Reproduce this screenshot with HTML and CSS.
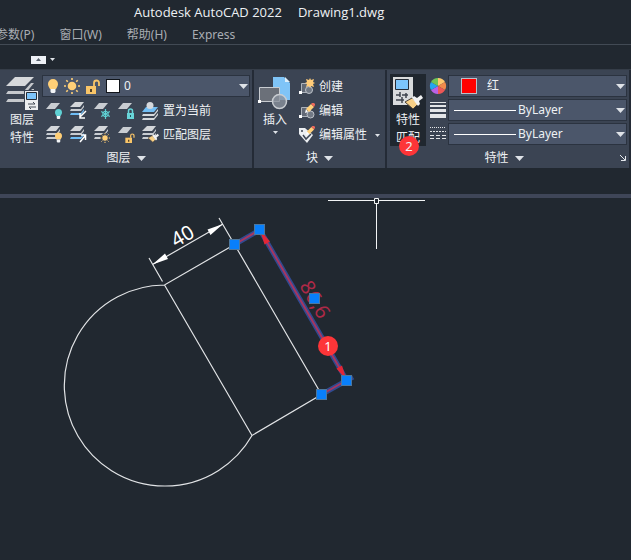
FILE: index.html
```html
<!DOCTYPE html>
<html lang="zh-CN">
<head>
<meta charset="utf-8">
<title>Autodesk AutoCAD 2022 - Drawing1.dwg</title>
<link rel="stylesheet" href="styles.css">
</head>
<body>
<svg class="defs" aria-hidden="true">
  <symbol id="sheet" viewBox="0 0 18 18"><path d="M5 1h9L9 7H0z" fill="#c9cdd2"/></symbol>
  <symbol id="stack" viewBox="0 0 18 18">
    <path d="M5 0h9l-4 5H0z" fill="#d3d6da"/>
    <path d="M1 7h10l3-4v2l-3 4H0zM1 11h10l3-4v2l-3 4H0z" fill="#c9cdd2"/>
  </symbol>
  <symbol id="bluestack" viewBox="0 0 18 18">
    <path d="M5 0h9l-4 5H0z" fill="#d3d6da"/>
    <path d="M1 7h10l3-4v2l-3 4H0z" fill="#c9cdd2"/>
    <path d="M1 11h10l3-4v2l-3 4H0z" fill="#6fbdf5"/>
  </symbol>
  <symbol id="bulb" viewBox="0 0 10 14">
    <path d="M5 0a5 5 0 0 1 5 5c0 2-1 3-2 5H2C1 8 0 7 0 5a5 5 0 0 1 5-5z" fill="currentColor"/>
    <path d="M2.500 10h5v3l-1 1h-3l-1-1z" fill="#f3f5f7"/>
  </symbol>
  <symbol id="sun" viewBox="0 0 16 16">
    <circle cx="8" cy="8" r="4.300" fill="#ffcf77"/>
    <path d="M8 0v2M8 14v2M0 8h2M14 8h2M2.300 2.300l1.500 1.500M12.200 12.200l1.500 1.500M2.300 13.700l1.500-1.500M12.200 3.800l1.500-1.500" stroke="#ffcf77" stroke-width="1.600"/>
  </symbol>
  <symbol id="unlock" viewBox="0 0 14 15">
    <path d="M0 7h10v8H0z" fill="#f9c568"/>
    <path d="M8 7V4a2.500 2.500 0 0 1 5 0v3" fill="none" stroke="#f9c568" stroke-width="1.800"/>
    <path d="M4 10h2v3H4z" fill="#51422b"/>
  </symbol>
  <symbol id="pencil" viewBox="0 0 10 10">
    <path d="M0 10l1-4 2 3z" fill="#fff"/><path d="M1 6l5-5 3 3-5 5z" fill="#ffd07a"/><path d="M6 1l1-1h2l1 1v1L9 4z" fill="#ef6a5b"/>
  </symbol>
  <symbol id="brush" viewBox="0 0 18 14">
    <path d="M7 3l6 6-5 5L0 7z" fill="#f7cf86" stroke="#4a4238"/>
    <path d="M7 3l2-2 3 2 4-3 2 3-4 3 1 3-2 2z" fill="#f1f2f3"/>
  </symbol>
  <symbol id="down" viewBox="0 0 9 5"><path d="M0 0h9L4.500 5z" fill="#dfe3e8"/></symbol>
</svg>

<header class="titlebar"><span>Autodesk AutoCAD 2022</span><span>Drawing1.dwg</span></header>
<nav class="menubar">
  <a href="#">参数(P)</a><a href="#">窗口(W)</a><a href="#">帮助(H)</a><a href="#">Express</a>
</nav>
<div class="tabstrip">
  <button class="minimize" aria-label="最小化功能区"><svg width="5" height="3" viewBox="0 0 5 3"><path d="M0 3h5L2.500 0z" fill="#59616d"/></svg></button>
  <button class="plain" aria-label="功能区选项"><svg width="5" height="3"><use href="#down"/></svg></button>
</div>

<main>
<div class="ribbon">
  <section class="panel layers">
    <div class="body">
      <button class="big">
        <svg width="32" height="34" viewBox="0 0 32 34">
          <path d="M9 1h19l-9 9H0z" fill="#d6d8db"/>
          <path d="M2 15h16l7-8h3l-9 11H0zM2 23h16l8-10h2v2l-9 11H0z" fill="#c6c9cd"/>
          <path d="M18 14h14v20H18z" fill="#3b4453"/>
          <path d="M19 15h13v19H19z" fill="#eceef0"/>
          <path d="M20.500 16.500h10v7h-10z" fill="#7dc4fa" stroke="#252c36"/>
          <path d="M22 28h7l-2-2M30 31h-7l2 2" fill="none" stroke="#424a55"/>
        </svg>
        <span>图层</span><span>特性</span>
      </button>
      <div class="rows">
        <div class="combo layer-combo">
          <svg class="amber" width="10" height="14"><use href="#bulb"/></svg>
          <svg width="16" height="16"><use href="#sun"/></svg>
          <svg width="14" height="15"><use href="#unlock"/></svg>
          <i class="swatch white"></i>
          <select aria-label="图层"><option>0</option></select>
          <svg class="arrow" width="9" height="5"><use href="#down"/></svg>
        </div>
        <div class="tools">
          <button aria-label="关"><svg width="18" height="18"><use href="#sheet" width="18" height="18"/><use class="teal" href="#bulb" x="9" y="7" width="7" height="10"/></svg></button>
          <button aria-label="隔离"><svg width="18" height="18"><use href="#bluestack" width="18" height="18"/><path d="M16 9l-6 6M10 11v5h5" fill="none" stroke="#fff" stroke-width="1.500"/></svg></button>
          <button aria-label="冻结"><svg width="18" height="18"><use href="#sheet" width="18" height="18"/><path d="M11.500 7v10M7.200 9.500l8.600 5M15.800 9.500l-8.600 5" stroke="#5fd0d3" stroke-width="1.200"/><circle cx="11.500" cy="12" r="2.800" fill="none" stroke="#5fd0d3"/></svg></button>
          <button aria-label="锁定"><svg width="18" height="18"><use href="#sheet" width="18" height="18"/><path d="M9 11h7v6H9z" fill="#68d5d9"/><path d="M10.500 11V9a2 2 0 0 1 4 0v2" fill="none" stroke="#68d5d9" stroke-width="1.500"/><path d="M12 13h1v2h-1z" fill="#26525a"/></svg></button>
          <button class="labelled"><svg width="18" height="18"><path d="M4 5h12l-4 5H0z" fill="#73bff5"/><path d="M1 12h11l4-5v2l-4 5H0zM1 16h11l4-5v2l-4 5H0z" fill="#d5d8dc"/><circle cx="8" cy="3.500" r="3.500" fill="#d5d8dc"/></svg>置为当前</button>
        </div>
        <div class="tools">
          <button aria-label="打开所有图层"><svg width="18" height="18"><use href="#stack" width="18" height="18"/><use class="amber" href="#bulb" x="9" y="6" width="7" height="11"/></svg></button>
          <button aria-label="取消隔离"><svg width="18" height="18"><use href="#bluestack" width="18" height="18"/><path d="M10 16l5-6M11 9h4.500v5" fill="none" stroke="#fff" stroke-width="1.500"/></svg></button>
          <button aria-label="解冻所有图层"><svg width="18" height="18"><use href="#stack" width="18" height="18"/><circle cx="11" cy="12" r="5" fill="#3b4453"/><use href="#sun" x="6" y="7" width="10" height="10"/></svg></button>
          <button aria-label="解锁"><svg width="18" height="18"><use href="#sheet" width="18" height="18"/><use href="#unlock" x="7" y="7" width="10" height="10"/></svg></button>
          <button class="labelled"><svg width="18" height="18"><use href="#stack" width="18" height="18"/><use href="#brush" x="6" y="7" width="11" height="10"/></svg>匹配图层</button>
        </div>
      </div>
    </div>
    <footer><button class="plain">图层<svg width="9" height="5"><use href="#down"/></svg></button></footer>
  </section>

  <section class="panel blocks">
    <div class="body">
      <button class="big">
        <svg width="34" height="34" viewBox="0 0 34 34">
          <path d="M15 1h11l6 6v17H15z" fill="#7fc4f7"/><path d="M27 1v5h5z" fill="#dceefa"/>
          <path d="M1.500 11.500h20v14h-20z" fill="#6b7079" stroke="#c8ccd1"/>
          <circle cx="21.500" cy="25.500" r="7" fill="#8a919ccc" stroke="#c8ccd1" stroke-width="1.500"/>
          <path d="M0 24h3v3H0z" fill="#fff"/>
        </svg>
        <span>插入</span>
        <svg class="drop" width="5" height="3"><use href="#down"/></svg>
      </button>
      <div class="rows">
        <button class="labelled"><svg width="18" height="18"><path d="M3.500 5.500h9v9h-9z" fill="#626976" stroke="#aeb4bc"/><circle cx="11" cy="12" r="3.500" fill="#717985" stroke="#bdc2c9"/><path d="M1 13h3v3H1z" fill="#fff"/><path d="M12 0l1 2 3-1-1 3 2 1-2 1 1 3-3-1-1 2-1-2-3 1 1-3-2-1 2-1-1-3 3 1z" fill="#ffcb78"/></svg>创建</button>
        <button class="labelled"><svg width="18" height="18"><path d="M3.500 5.500h9v9h-9z" fill="#626976" stroke="#aeb4bc"/><circle cx="12.500" cy="12.500" r="3.500" fill="#717985" stroke="#bdc2c9"/><path d="M1 13h3v3H1z" fill="#fff"/><use href="#pencil" x="7" y="1" width="10" height="10"/></svg>编辑</button>
        <button class="labelled"><svg width="18" height="18"><path d="M1 2h6l8 7-6 8-8-9z" fill="#eceff2"/><circle cx="4" cy="5" r="1" fill="#3b4453"/><path d="M5 9l3 4 5-5" fill="none" stroke="#3b4453" stroke-width="1.500"/><use href="#pencil" x="8" y="0" width="9" height="9"/></svg>编辑属性<svg class="more" width="5" height="3"><use href="#down"/></svg></button>
      </div>
    </div>
    <footer><button class="plain">块<svg width="9" height="5"><use href="#down"/></svg></button></footer>
  </section>

  <section class="panel properties">
    <div class="body">
      <div class="match">
        <button class="big active">
          <svg width="32" height="34" viewBox="0 0 32 34">
            <path d="M1 1h20v28H1z" fill="#d9dbdc"/>
            <path d="M3.500 3.500h13v10h-13z" fill="#7cc5fb" stroke="#252c36"/>
            <path d="M4 19h4m2 0h6M4 24h8M8 16v5M10 21v6M14 17v5" stroke="#3f454e" stroke-width="1.500"/>
            <use href="#brush" x="13" y="19" width="18" height="14"/>
          </svg>
          <span>特性</span><span>匹配</span>
        </button>
        <span class="badge">2</span>
      </div>
      <div class="rows">
        <div class="property">
          <svg width="18" height="18" viewBox="-9 -9 18 18">
            <path d="M0 0V-8A8 8 0 0 1 7-4z" fill="#ffc86d"/><path d="M0 0l7-4a8 8 0 0 1 0 8z" fill="#f18a4b"/><path d="M0 0l7 4a8 8 0 0 1-7 4z" fill="#ee5756"/><path d="M0 0v8a8 8 0 0 1-7-4z" fill="#bb61e5"/><path d="M0 0l-7 4a8 8 0 0 1 0-8z" fill="#25a5f1"/><path d="M0 0l-7-4a8 8 0 0 1 7-4z" fill="#6fc557"/>
          </svg>
          <div class="combo"><i class="swatch red"></i><select aria-label="对象颜色"><option>红</option></select><svg class="arrow" width="9" height="5"><use href="#down"/></svg></div>
        </div>
        <div class="property">
          <svg width="18" height="18"><path d="M1 1h16v1H1zM1 4h16v2H1zM1 8h16v3H1zM1 13h16v4H1z" fill="#e3e5e8"/></svg>
          <div class="combo"><i class="sample"></i><select aria-label="线宽"><option>ByLayer</option></select><svg class="arrow" width="9" height="5"><use href="#down"/></svg></div>
        </div>
        <div class="property">
          <svg width="18" height="18" stroke="#e3e5e8" fill="none"><path d="M1 2.500h16" stroke-dasharray="1 1"/><path d="M1 6.500h16" stroke-dasharray="2 1"/><path d="M1 10.500h16" stroke-dasharray="4 2"/><path d="M1 13.500h16" stroke-dasharray="4 2"/></svg>
          <div class="combo"><i class="sample"></i><select aria-label="线型"><option>ByLayer</option></select><svg class="arrow" width="9" height="5"><use href="#down"/></svg></div>
        </div>
      </div>
    </div>
    <footer><button class="plain">特性<svg width="9" height="5"><use href="#down"/></svg></button>
      <button class="plain launcher" aria-label="特性选项板"><svg width="6" height="6" viewBox="0 0 6 6"><path d="M0 0l5 5M5.500 1v4.500H1" fill="none" stroke="#e3e7ec"/></svg></button></footer>
  </section>
</div>

<svg class="drawing" viewBox="0 198 631 362" preserveAspectRatio="xMinYMin meet" role="img" aria-label="图形窗口">
  <g class="geometry">
    <path d="M252 435.500A100.500 100.500 0 1 1 164.500 285L234.500 244.500L321.500 394.500L252 435.500L164.500 285"/>
    <path d="M162.500 281.500L149 258M234.500 244.500L219 218M152.500 264.500L223 224"/>
  </g>
  <path class="tips" d="M152.500 264.500L165 253.500L168 259ZM223 224L207.500 229.500L210.500 235Z"/>
  <text class="dim" text-anchor="middle" transform="translate(186 242) rotate(-30)">40</text>
  <text class="dim selected-text" text-anchor="middle" transform="translate(309 303) rotate(60)">86,6</text>
  <g class="selected">
    <path class="glow" d="M234.500 244.500L264 227.500M321.500 394.500L353 377M260 230L346.500 380"/>
    <path d="M234.500 244.500L262 228.500M321.500 394.500L350 378.500M260 230L346.500 380"/>
  </g>
  <path class="selected-tips" d="M260 230L270 241.500L264.500 244.500ZM346.500 380L336.500 368.500L342 365.500Z"/>
  <g class="grips">
    <rect x="254.500" y="224.500" width="10" height="10"/><rect x="229.500" y="239.500" width="10" height="10"/>
    <rect x="309.500" y="293.500" width="10" height="10"/><rect x="341.500" y="375.500" width="10" height="10"/>
    <rect x="316.500" y="389.500" width="10" height="10"/>
  </g>
  <circle cx="328" cy="346" r="10" fill="#fd3538"/>
  <text class="marker" x="328" y="351" text-anchor="middle">1</text>
  <path class="crosshair" d="M328 200.500H374M379 200.500H425M376.500 203V249M374.500 198.500h4v5h-4z"/>
</svg>
</main>
</body>
</html>
```

FILE: styles.css
```css
* { box-sizing: border-box; }

body {
  margin: 0;
  min-height: 100vh;
  background: #212830;
  color: #eef1f4;
  font: 12px/18px "Noto Sans", "Noto Sans CJK SC", sans-serif;
}

svg { display: block; flex: none; }
.defs { position: absolute; width: 0; height: 0; }

button, select {
  margin: 0;
  padding: 0;
  border: 0;
  background: none;
  color: inherit;
  font: inherit;
}

.titlebar {
  display: flex;
  gap: 16px;
  height: 24px;
  padding-left: 134px;
  font-family: "Open Sans", sans-serif;
  font-size: 13px;
  line-height: 24px;
}

.menubar {
  display: flex;
  gap: 25px;
  height: 21px;
  margin-left: -4px;
  border-bottom: 1px solid #424a54;
  line-height: 22px;
}
.menubar a { color: #a9adb3; text-decoration: none; white-space: nowrap; }

.tabstrip {
  display: flex;
  align-items: center;
  gap: 4px;
  height: 25px;
  padding: 5px 0 0 31px;
  border-bottom: 1px solid #353d48;
}
.minimize {
  display: grid;
  place-items: center;
  width: 15px;
  height: 8px;
  background: #eef1f6;
}

.plain { display: inline-flex; align-items: center; gap: 6px; }

.ribbon { display: flex; margin-bottom: 26px; background: #3b4453; }
.panel { padding-top: 4px; border-right: 2px solid #242b36; }
.layers { flex: none; width: 254px; }
.blocks { flex: none; width: 133px; }
.properties { flex: 1; min-width: 0; }
.body { display: flex; height: 73px; }
.rows { display: grid; flex: 1; grid-template-rows: repeat(3, 24px); min-width: 0; }

.layers .body { gap: 4px; padding: 0 2px 0 6px; }
.blocks .body { gap: 6px; padding-left: 4px; }
.properties .body { gap: 3px; padding: 0 2px 0 3px; }

.big {
  display: flex;
  flex-direction: column;
  align-items: center;
  flex: none;
  width: 32px;
  height: 72px;
  padding-top: 2px;
  overflow: hidden;
}
.big span { flex: none; margin-top: 1px; line-height: 17px; }
.drop { margin-top: 3px; }
.blocks .big { width: 34px; }
.match { position: relative; }
.match .big { width: 36px; background: #20272f; }
.badge {
  position: absolute;
  left: 9px;
  top: 62px;
  width: 20px;
  border-radius: 50%;
  background: #fd3538;
  font-size: 13px;
  line-height: 20px;
  text-align: center;
}

.combo {
  display: flex;
  align-items: center;
  flex: 1;
  height: 22px;
  min-width: 0;
  padding: 0 1px 0 5px;
  border: 1px solid #2b3340;
  background: #4b566a;
}
.combo select { flex: 1; min-width: 0; appearance: none; }
.layer-combo { gap: 6px; align-self: center; }
.layer-combo .swatch { margin-right: -2px; }
.arrow { pointer-events: none; }
.swatch { flex: none; border: 1px solid #11151a; }
.white { width: 14px; height: 14px; background: #fff; }
.red { width: 16px; height: 16px; margin: 0 10px 0 7px; border-color: #b9c0c9; background: #f00; }
.sample { flex: none; width: 62px; height: 1px; margin-right: 2px; background: #fff; }

.amber { color: #ffcf77; }
.teal { color: #5fd0d3; }

.tools { display: flex; align-items: center; padding: 2px 0 0 4px; }
.tools button { flex: none; width: 24px; }
.tools .labelled { width: auto; padding: 0; }
.labelled { display: flex; align-items: center; gap: 3px; padding-top: 2px; white-space: nowrap; }
.more { margin-left: 5px; }
.property { display: flex; align-items: center; gap: 1px; }

footer { position: relative; height: 21px; line-height: 20px; padding-top: 2px; text-align: center; }
footer .plain { height: 18px; vertical-align: top; }
.properties footer { padding-right: 8px; }
footer .launcher { position: absolute; right: 3px; top: 2px; }

.drawing { width: 100%; border-top: 4px solid #3f4658; }
.geometry { fill: none; stroke: #e2e4e6; stroke-width: 1.2; }
.tips { fill: #fff; }
.dim { fill: #fff; font-size: 20px; }
.selected { fill: none; stroke: #a63661; stroke-width: 2; }
.selected .glow { stroke: #304b91; stroke-width: 5; }
.selected-tips { fill: #e32636; }
.selected-text { fill: #ae2947; }
.grips { fill: #087ffb; stroke: #4d789f; }
.marker { fill: #fff; font-size: 13px; }
.crosshair { fill: none; stroke: #f2f4f5; }
```
